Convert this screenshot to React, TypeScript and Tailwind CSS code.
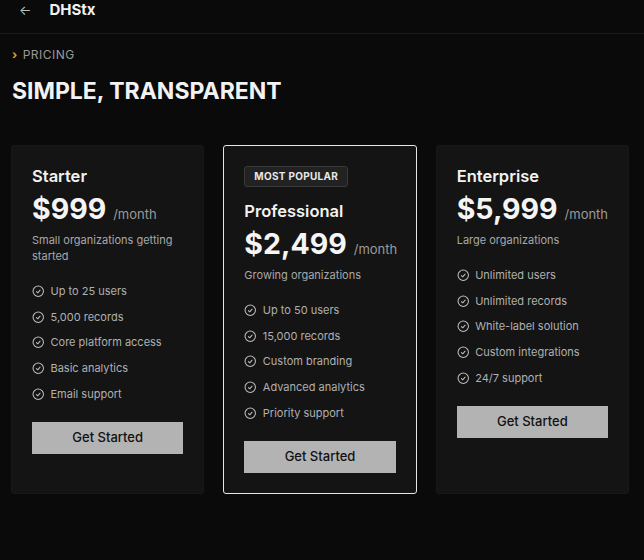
import React from "react";

const CheckIcon = () => (
  <svg width="12.5" height="12.5" viewBox="0 0 24 24" fill="none" stroke="#bdbdbd" strokeWidth="2" strokeLinecap="round" strokeLinejoin="round" className="shrink-0">
    <circle cx="12" cy="12" r="10" />
    <path d="m8.5 12.5 2.5 2.5 4.5-5" />
  </svg>
);

type Plan = {
  name: string;
  price: string;
  desc: string;
  features: string[];
  popular?: boolean;
};

const plans: Plan[] = [
  {
    name: "Starter",
    price: "$999",
    desc: "Small organizations getting started",
    features: ["Up to 25 users", "5,000 records", "Core platform access", "Basic analytics", "Email support"],
  },
  {
    name: "Professional",
    price: "$2,499",
    desc: "Growing organizations",
    features: ["Up to 50 users", "15,000 records", "Custom branding", "Advanced analytics", "Priority support"],
    popular: true,
  },
  {
    name: "Enterprise",
    price: "$5,999",
    desc: "Large organizations",
    features: ["Unlimited users", "Unlimited records", "White-label solution", "Custom integrations", "24/7 support"],
  },
];

function Card({ plan }: { plan: Plan }) {
  return (
    <div
      className={
        "flex flex-col rounded-[3px] bg-[#141414] p-5 border " +
        (plan.popular ? "border-[#e6e6e6]" : "border-[#181818]")
      }
    >
      {plan.popular && (
        <div className="mb-[14px] self-start rounded-[3px] border border-[#3a3a3a] bg-[#222222] px-[9px] h-[21px] flex items-center text-[10px] font-bold tracking-[0.03em] text-[#e8e8e8]">
          MOST POPULAR
        </div>
      )}
      <div className="text-[16.5px] leading-5 font-semibold text-[#f2f2f2]">{plan.name}</div>
      <div className="mt-[5px] flex items-baseline">
        <span className="text-[28.5px] leading-9 font-bold text-[#f5f5f5]">{plan.price}</span>
        <span className="ml-[7px] text-[13px] text-[#9a9a9a]">/month</span>
      </div>
      <div className="mt-[5px] text-[11px] leading-4 text-[#a8a8a8]">{plan.desc}</div>
      <ul className="mt-[19px] flex flex-col gap-[9.75px]">
        {plan.features.map((f) => (
          <li key={f} className="flex items-center gap-[6px] h-4 text-[11px] text-[#b0b0b0]">
            <CheckIcon />
            <span>{f}</span>
          </li>
        ))}
      </ul>
      <button className="mt-5 h-[32px] w-full bg-[#b3b3b3] text-[13px] font-medium text-[#111111]">
        Get Started
      </button>
    </div>
  );
}

export default function App() {
  return (
    <div className="min-h-[560px] bg-[#0a0a0a] text-white" style={{ fontFamily: "Inter, 'Noto Sans', sans-serif" }}>
      <header className="flex h-[34px] items-start border-b border-[#1c1c1c]">
        <span className="ml-[19px] text-[13px] leading-5 text-[#bdbdbd]">←</span>
        <span className="ml-[18px] text-[15px] leading-5 font-bold text-[#f2f2f2]">DHStx</span>
      </header>
      <div className="px-3">
        <div className="mt-[13px] flex items-center gap-[5px] text-[12px] leading-4 tracking-[0.04em] text-[#9a9a9a]">
          <span className="text-[#e0a030] font-bold">›</span>
          <span>PRICING</span>
        </div>
        <h1 className="mt-[12px] text-[23px] leading-8 font-bold text-[#f2f2f2]">SIMPLE, TRANSPARENT</h1>
      </div>
      <div className="mt-[38px] ml-[11px] grid w-[618px] grid-cols-3 gap-[19px]">
        {plans.map((p) => (
          <Card key={p.name} plan={p} />
        ))}
      </div>
    </div>
  );
}
